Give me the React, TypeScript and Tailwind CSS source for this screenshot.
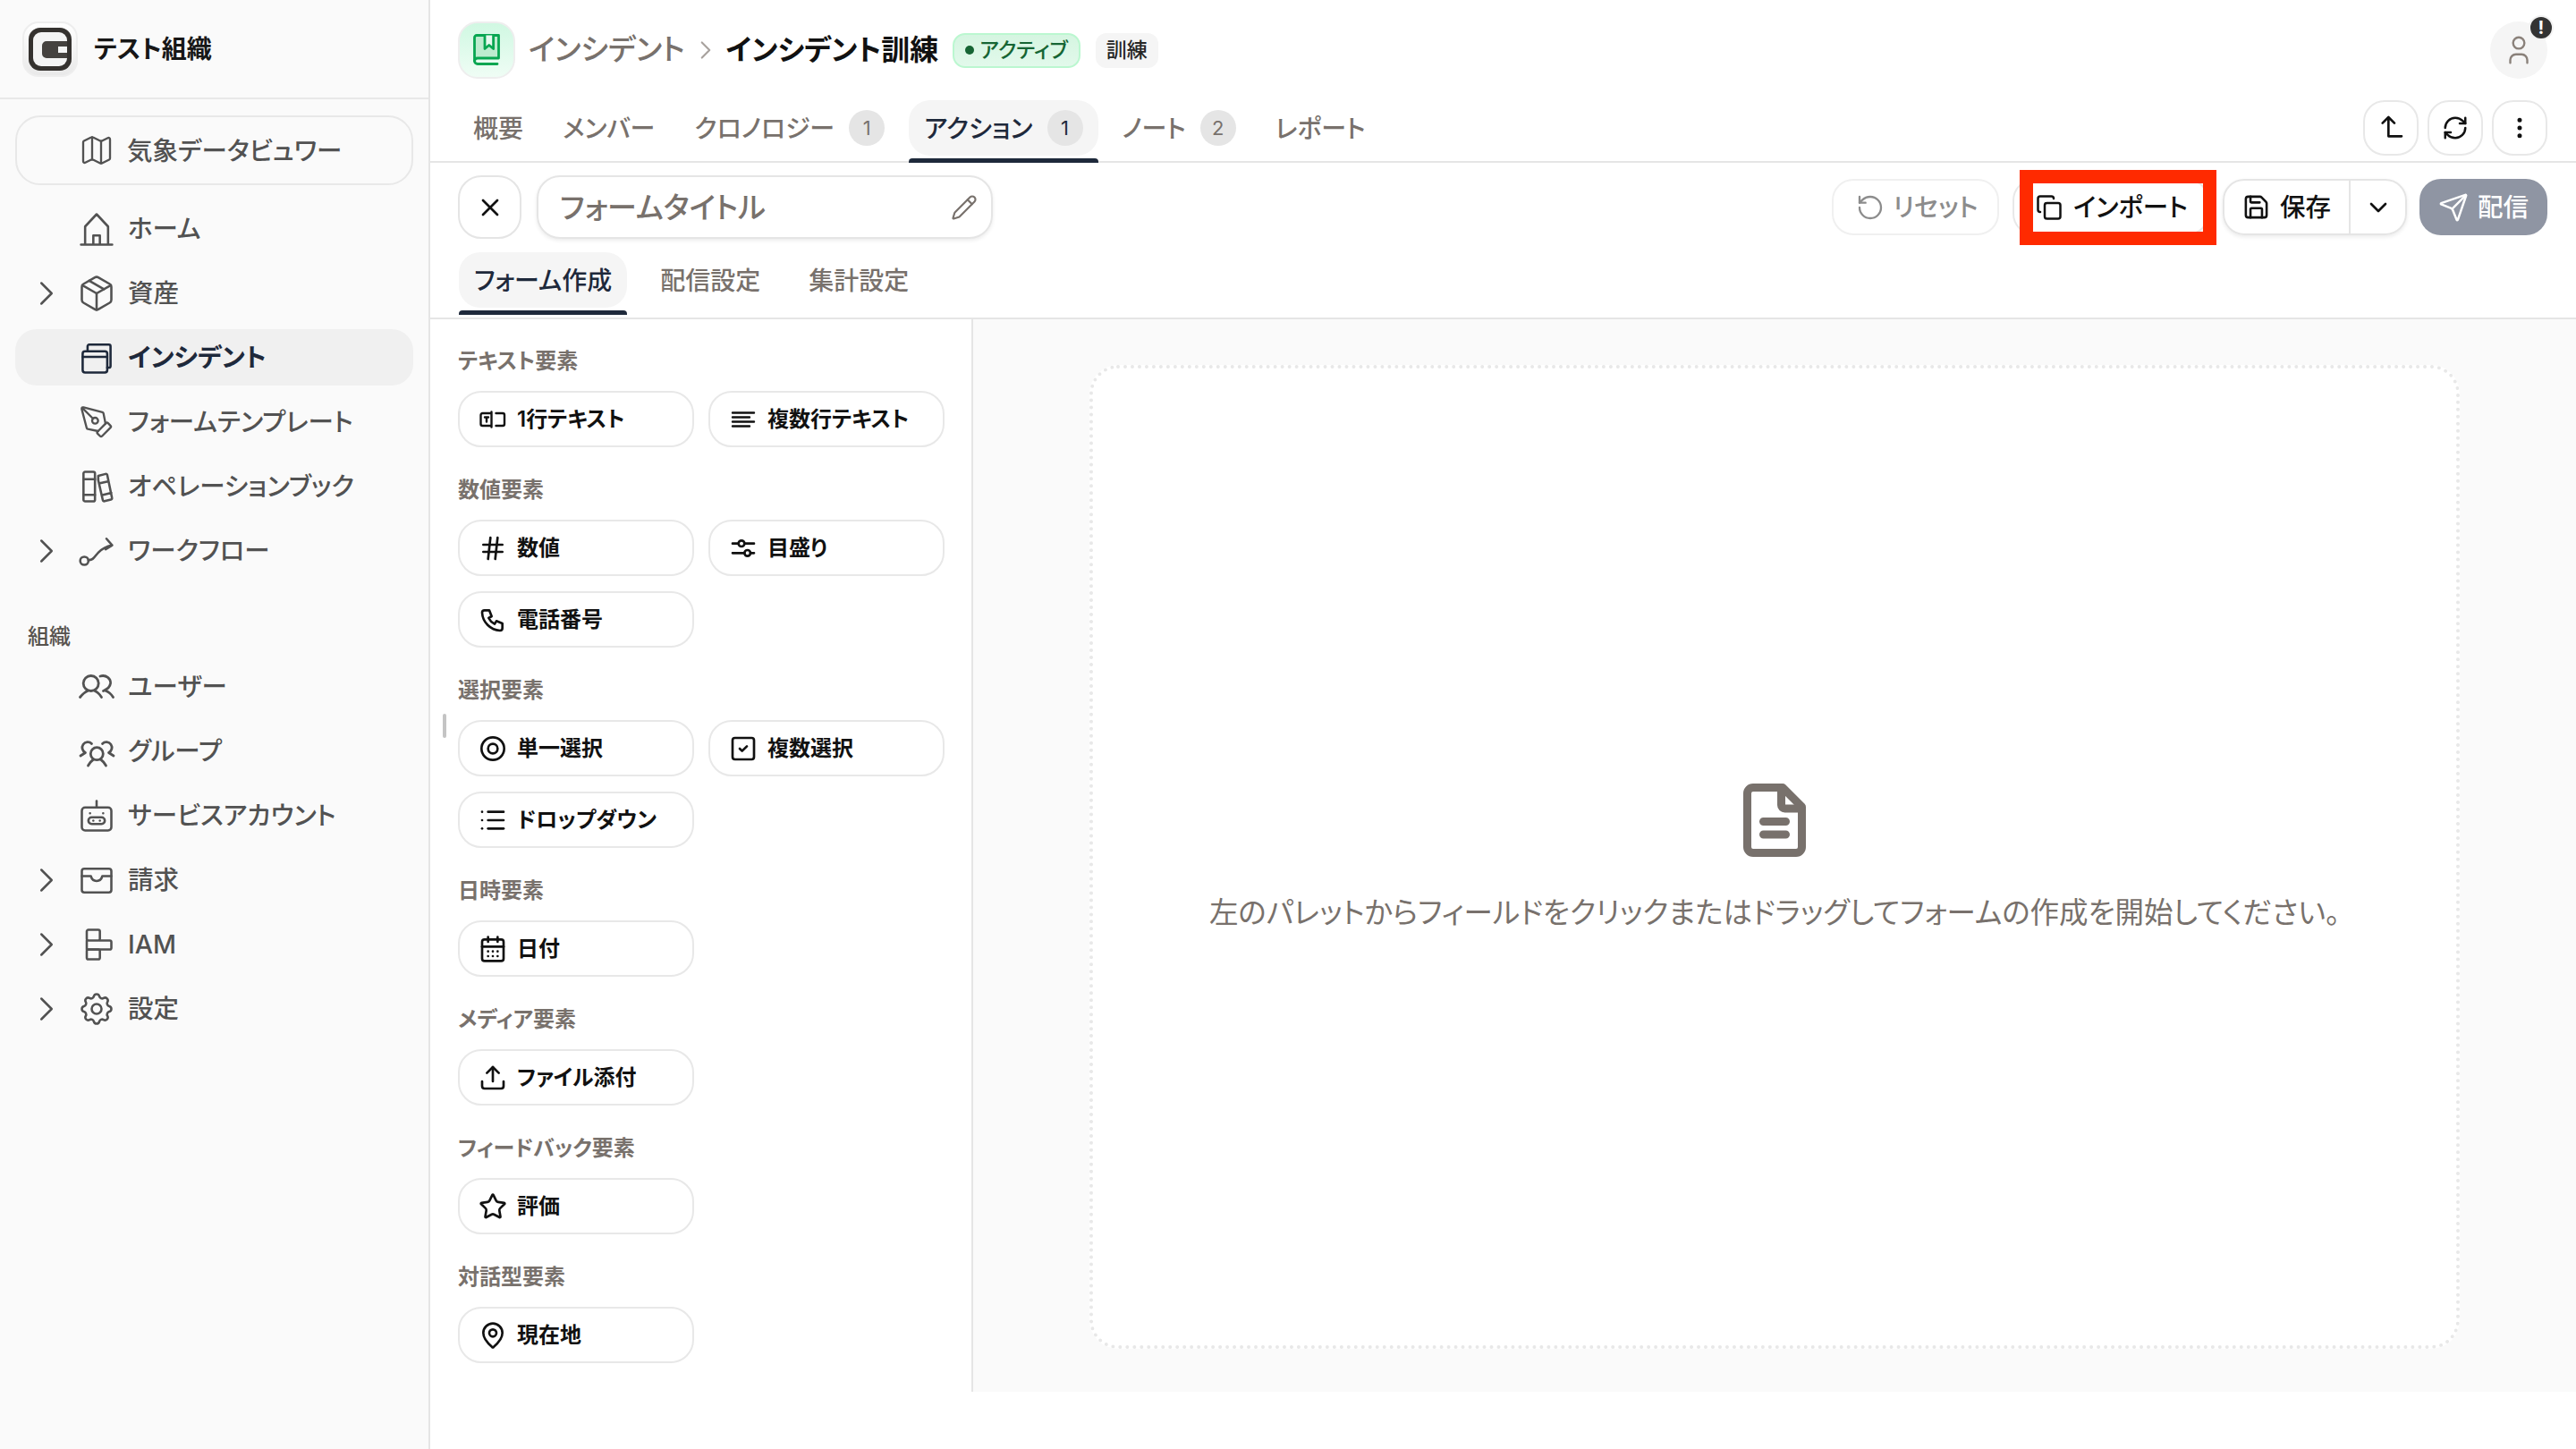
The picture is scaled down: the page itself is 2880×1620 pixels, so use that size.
import { ReactNode } from 'react'
import {
  CalendarDays, ChevronDown, ChevronRight, Copy, Hash, List, Map, MapPin, MoreVertical,
  Package, Pencil, PenTool, RefreshCw, RotateCcw, Save, Send, SquareCheck, Star, Upload, X,
} from 'lucide-react'
import { TbPhone, TbSettings, TbUser } from 'react-icons/tb'

function Ico({ children, size = 44, stroke = 1.4 }: { children: ReactNode; size?: number; stroke?: number }) {
  return (
    <svg width={size} height={size} viewBox="0 0 24 24" fill="none" stroke="currentColor" strokeWidth={stroke} strokeLinecap="round" strokeLinejoin="round">
      {children}
    </svg>
  )
}

// icons traced at pixel size
function PxIco({ w, h, stroke, children }: { w: number; h: number; stroke: number; children: ReactNode }) {
  return (
    <svg width={w} height={h} viewBox={`0 0 ${w} ${h}`} fill="none" stroke="currentColor" strokeWidth={stroke} strokeLinecap="round" strokeLinejoin="round">
      {children}
    </svg>
  )
}

const lucide = { size: 44, strokeWidth: 1.4 }
const pal = { size: 32, strokeWidth: 2 }

const HouseIcon = () => (
  <Ico><path d="M2.5 21.5h19M5 21.5V10.5L12 3l7 7.5v11M10 21.5V16h4v5.5" /></Ico>
)
const CardsIcon = () => (
  <Ico><rect x="3.5" y="8" width="15" height="13" rx="1.5" /><path d="M3.5 11.5h15M6.5 8V5a1 1 0 0 1 1-1h12a1 1 0 0 1 1 1v12a1 1 0 0 1-1 1h-1" /></Ico>
)
const BooksIcon = () => (
  <Ico><rect x="4" y="3" width="7" height="18" rx="1" /><path d="M4 7.5h7M4 17h7M13 5.5l4.5-1.2a.8.8 0 0 1 1 .6l2.9 14a.8.8 0 0 1-.6 1l-4 1a.8.8 0 0 1-1-.6L13 8zM14 10l5-1.2M16 17l5-1.2" /></Ico>
)
const RouteIcon = () => (
  <Ico><circle cx="4.5" cy="18" r="2.5" /><path d="M7 17.5c3 .5 4-2.5 6-4.5s4-3.5 8.5-4.5M18 4.5l3.5 4-4 2.5" /></Ico>
)
const UsersIcon = () => (
  <PxIco w={44} h={44} stroke={2.8}>
    <circle cx="15.7" cy="18" r="8.5" />
    <path d="M3.5 33.5Q8 28 12 26.5M20 26.5Q24 28 27.5 33.5" />
    <path d="M26 10C33 8 38 13 37.5 18C37 22 33 25 29.5 26.5M32.5 26.5Q37 28 40.5 33.5" />
  </PxIco>
)
const GroupIcon = () => (
  <PxIco w={44} h={44} stroke={2.8}>
    <circle cx="22.3" cy="24.7" r="7" />
    <path d="M12.5 38Q15 33.5 18 31.5M27 31.5Q30 33.5 32.5 38" />
    <path d="M16.5 13.5A6.2 6.2 0 1 0 9.5 23.5L4 27M28.5 13.5A6.2 6.2 0 1 1 35.5 23.5L41 27" />
  </PxIco>
)
const BotIcon = () => (
  <Ico><rect x="3" y="7" width="18" height="14" rx="2" /><path d="M12 3v4" /><rect x="7" y="13" width="10" height="4" rx="2" /><path d="M10 15h.01M14 15h.01M8 10.5h.01M16 10.5h.01" /></Ico>
)
const WalletIcon = () => (
  <Ico><rect x="3" y="5" width="18" height="14.5" rx="1.5" /><path d="M3 9.5h5.5c.5 2 1.8 3 3.5 3s3-1 3.5-3H21" /></Ico>
)
const IamIcon = () => (
  <Ico><rect x="6" y="3" width="8" height="6.5" rx="1" /><rect x="6" y="15" width="8" height="6" rx="1" /><path d="M6 9.5V15M14 9.5h6a1 1 0 0 1 1 1V14a1 1 0 0 1-1 1H6" /></Ico>
)
const TargetIcon = () => (
  <Ico size={32} stroke={2}><circle cx="12" cy="12" r="9.5" /><circle cx="12" cy="12" r="4" /></Ico>
)
const SlidersIcon = () => (
  <Ico size={32} stroke={2}><path d="M3 8h5M13 8h8M3 16h10M18 16h3" /><circle cx="10.5" cy="8" r="2.5" /><circle cx="15.5" cy="16" r="2.5" /></Ico>
)
const SingleLineIcon = () => (
  <PxIco w={32} h={20} stroke={2.4}>
    <path d="M14.5 1.5v17M14.5 3H4.5a2 2 0 0 0-2 2v10a2 2 0 0 0 2 2h10" />
    <path d="M19.5 3H27a2 2 0 0 1 2 2v10a2 2 0 0 1-2 2h-7.5" />
    <path d="M7 7.5h4M9 7.5v5" />
  </PxIco>
)
const MultiLineIcon = () => (
  <PxIco w={28} h={20} stroke={2.4}>
    <path d="M2 2.5h24M2 7.5h19M2 12.5h24M2 17.5h19" />
  </PxIco>
)
const BookIcon = () => (
  <svg width="32" height="38" viewBox="0 0 32 38" fill="none" stroke="#08a651" strokeWidth="2.8" strokeLinecap="round" strokeLinejoin="round">
    <path d="M2.5 31V5a2.5 2.5 0 0 1 2.5-2.5h24.5V28H6a3.5 3.5 0 0 0-3.5 3z" fill="#bdeccf" />
    <path d="M14 2.5v15l4.8-4 4.8 4v-15" fill="#e6f9ee" />
    <path d="M2.5 31a3.5 3.5 0 0 0 3.5 3.5h22" />
  </svg>
)

function Logo() {
  return (
    <div className="flex h-[62px] w-[62px] items-center justify-center rounded-[18px] border-2 border-[#eeeeee] bg-gradient-to-b from-white to-[#e9e9e9]">
      <svg width="48" height="48" viewBox="0 0 48 48">
        <rect x="0" y="0" width="48" height="48" rx="13" fill="#35322f" />
        <rect x="5" y="5" width="38" height="38" rx="9" fill="#f4f4f4" />
        <path d="M20 15h23v6H33v7h10v6H20a5 5 0 0 1-5-5v-9a5 5 0 0 1 5-5z" fill="#45423f" />
      </svg>
    </div>
  )
}

function NavRow({ icon, label, chevron, active }: { icon: ReactNode; label: string; chevron?: boolean; active?: boolean }) {
  return (
    <div className={`flex h-[63px] items-center rounded-[24px] pl-[23px] ${active ? 'bg-[#f0f0f0] font-semibold text-[#1e293b]' : 'font-medium text-[#525252]'}`}>
      <span className="flex w-[24px] justify-center">
        {chevron && <ChevronRight size={46} strokeWidth={1.3} className="shrink-0" />}
      </span>
      <span className="ml-[22px] flex w-[44px] justify-center">{icon}</span>
      <span className="ml-[13px] pt-[2px]">{label}</span>
    </div>
  )
}

function Sidebar() {
  return (
    <aside className="flex h-[1620px] w-[481px] shrink-0 flex-col border-r-2 border-[#e5e5e5] bg-[#fafafa] text-[28.5px]">
      <div className="flex h-[111px] shrink-0 items-center gap-[18px] border-b-2 border-[#e8e8e8] pl-[25px]">
        <Logo />
        <span className="text-[28px] font-semibold text-[#171717]">テスト組織</span>
      </div>
      <div className="flex flex-col px-[17px] pt-[18px]">
        <div className="mb-[17px] flex h-[78px] items-center rounded-[28px] border-2 border-[#e8e8e8] pl-[69px] font-medium text-[#525252]">
          <Map size={40} strokeWidth={1.4} />
          <span className="ml-[14px] pt-[2px]">気象データビュワー</span>
        </div>
        <div className="flex flex-col gap-[9px]">
          <NavRow icon={<HouseIcon />} label="ホーム" />
          <NavRow icon={<Package {...lucide} />} label="資産" chevron />
          <NavRow icon={<CardsIcon />} label="インシデント" active />
          <NavRow icon={<PenTool size={40} strokeWidth={1.4} />} label="フォームテンプレート" />
          <NavRow icon={<BooksIcon />} label="オペレーションブック" />
          <NavRow icon={<RouteIcon />} label="ワークフロー" chevron />
        </div>
        <div className="mt-[50px] mb-[9px] h-[30px] pl-[14px] text-[24px] leading-[30px] font-medium text-[#57534e]">組織</div>
        <div className="flex flex-col gap-[9px]">
          <NavRow icon={<UsersIcon />} label="ユーザー" />
          <NavRow icon={<GroupIcon />} label="グループ" />
          <NavRow icon={<BotIcon />} label="サービスアカウント" />
          <NavRow icon={<WalletIcon />} label="請求" chevron />
          <NavRow icon={<IamIcon />} label="IAM" chevron />
          <NavRow icon={<TbSettings size={46} strokeWidth={1.4} />} label="設定" chevron />
        </div>
      </div>
    </aside>
  )
}

function Tab({ label, count, active }: { label: string; count?: number; active?: boolean }) {
  return (
    <div className="flex flex-col">
      <div className={`flex h-[62px] items-center gap-[16px] rounded-[24px] px-[17px] text-[28px] font-medium ${active ? 'bg-[#f5f5f5] text-[#1e293b]' : 'text-[#78716c]'}`}>
        <span className="pt-[1px]">{label}</span>
        {count !== undefined && (
          <span className={`flex h-[40px] w-[40px] items-center justify-center rounded-full bg-[#e5e5e5] text-[22px] font-normal ${active ? 'text-[#1e293b]' : 'text-[#78716c]'}`}>{count}</span>
        )}
      </div>
      <div className={`mt-[3px] h-[5px] rounded-t-[4px] ${active ? 'bg-[#1e293b]' : ''}`} />
    </div>
  )
}

function IconButton({ children }: { children: ReactNode }) {
  return (
    <div className="flex h-[62px] w-[62px] items-center justify-center rounded-[24px] border-2 border-[#e8e8e8] bg-white text-[#111111]">{children}</div>
  )
}

function TopBar() {
  return (
    <div className="flex flex-col pt-[24px]">
      <div className="flex h-[64px] items-center pr-[32px] pl-[31px]">
        <div className="flex h-[64px] w-[64px] items-center justify-center rounded-[22px] border-2 border-[#eeeeee] bg-gradient-to-b from-[#d0f8e2] to-[#effdf5]">
          <BookIcon />
        </div>
        <span className="ml-[15px] text-[33px] font-medium text-[#78716c]">インシデント</span>
        <ChevronRight className="mx-[6px] text-[#a8a29e]" size={34} strokeWidth={1.5} />
        <span className="text-[32px] font-semibold text-[#111111]">インシデント訓練</span>
        <span className="ml-[16px] flex h-[39px] items-center gap-[6px] rounded-[14px] border-2 border-[#bbf7d0] bg-gradient-to-b from-[#d5f5e1] to-[#e2f9eb] px-[12px] text-[23px] font-medium text-[#166534]">
          <span className="h-[10px] w-[10px] rounded-full bg-[#166534]" />
          アクティブ
        </span>
        <span className="ml-[17px] flex h-[39px] items-center rounded-[12px] bg-[#f5f5f5] px-[12px] text-[23px] font-medium text-[#262626]">訓練</span>
        <div className="relative ml-auto flex h-[64px] w-[64px] items-center justify-center rounded-full bg-[#f5f5f5] text-[#8a817a]">
          <TbUser size={38} strokeWidth={1.5} />
          <span className="absolute -top-[7px] -right-[7px] flex h-[28px] w-[28px] items-center justify-center rounded-full border-2 border-[#f2f2f2] bg-[#333333] text-[20px] leading-none font-bold text-white">!</span>
        </div>
      </div>
      <div className="mt-[24px] flex h-[70px] items-start justify-between border-b-2 border-[#e5e5e5] pr-[32px] pl-[31px]">
        <div className="flex items-start gap-[10px]">
          <Tab label="概要" />
          <Tab label="メンバー" />
          <Tab label="クロノロジー" count={1} />
          <Tab label="アクション" count={1} active />
          <Tab label="ノート" count={2} />
          <Tab label="レポート" />
        </div>
        <div className="flex gap-[10px]">
          <IconButton>
            <Ico size={32} stroke={2}><path d="M5 8l5-5 5 5M10 3v16h11" /></Ico>
          </IconButton>
          <IconButton><RefreshCw size={30} strokeWidth={2} /></IconButton>
          <IconButton><MoreVertical size={30} strokeWidth={2} /></IconButton>
        </div>
      </div>
    </div>
  )
}

function Toolbar() {
  return (
    <div className="flex h-[100px] items-start justify-between pt-[14px] pr-[32px] pl-[31px]">
      <div className="flex gap-[17px]">
        <div className="flex h-[71px] w-[71px] items-center justify-center rounded-[26px] border-2 border-[#e5e5e5] text-[#111111]">
          <X size={32} strokeWidth={2} />
        </div>
        <div className="flex h-[71px] w-[510px] items-center justify-between rounded-[26px] border-2 border-[#e5e5e5] pr-[15px] pl-[24px] shadow-[0_2px_4px_rgba(0,0,0,0.08)]">
          <span className="pt-[2px] text-[33px] font-medium text-[#78716c]">フォームタイトル</span>
          <Pencil className="text-[#78716c]" size={30} strokeWidth={1.75} />
        </div>
      </div>
      <div className="mt-[4px] flex h-[63px] items-center text-[28.5px] font-medium">
        <div className="flex h-[63px] w-[187px] items-center justify-center gap-[10px] rounded-[24px] border-2 border-[#f0f0f0] pl-[3px] text-[#8c8c8c]">
          <RotateCcw size={32} strokeWidth={1.75} />
          <span className="pt-[2px]">リセット</span>
        </div>
        <div className="relative ml-[15px] flex h-[63px] w-[220px] items-center rounded-[24px] border-2 border-[#e8e8e8] pl-[24px] text-[#111111]">
          <Copy size={30} strokeWidth={2} />
          <span className="ml-[12px] pt-[2px]">インポート</span>
          <span className="absolute -top-[12px] right-[-10px] -bottom-[13px] left-[6px] border-[15px] border-[#ff2a00]" />
        </div>
        <div className="ml-[15px] flex h-[63px] w-[206px] items-center rounded-[24px] border-2 border-[#e5e5e5] text-[#111111] shadow-[0_2px_4px_rgba(0,0,0,0.08)]">
          <div className="flex h-full w-[141px] items-center justify-center gap-[11px] border-r-2 border-[#e5e5e5]">
            <Save size={31} strokeWidth={2} />
            <span className="pt-[2px]">保存</span>
          </div>
          <div className="flex flex-1 justify-center">
            <ChevronDown size={32} strokeWidth={2} />
          </div>
        </div>
        <div className="ml-[14px] flex h-[63px] w-[143px] items-center justify-center gap-[10px] rounded-[24px] bg-[#8f95a3] text-white">
          <Send size={34} strokeWidth={1.75} />
          <span className="pt-[2px]">配信</span>
        </div>
      </div>
    </div>
  )
}

function FieldButton({ icon, label }: { icon: ReactNode; label: string }) {
  return (
    <div className="flex h-[63px] w-[264px] items-center gap-[11px] rounded-[26px] border-2 border-[#e8e8e8] pl-[21px] text-[24px] font-semibold text-[#111111]">
      <span className="flex w-[32px] justify-center">{icon}</span>
      <span>{label}</span>
    </div>
  )
}

function Section({ title, children }: { title: string; children: ReactNode }) {
  return (
    <div>
      <div className="mb-[18px] h-[30px] text-[24px] leading-[30px] font-semibold text-[#78716c]">{title}</div>
      <div className="grid w-[544px] grid-cols-2 gap-x-[16px] gap-y-[17px]">{children}</div>
    </div>
  )
}

function Palette() {
  return (
    <div className="relative flex w-[607px] shrink-0 flex-col gap-[33px] border-r-2 border-[#e5e5e5] pt-[32px] pl-[31px]">
      <span className="absolute top-[441px] left-[14px] h-[27px] w-[4px] rounded-full bg-[#c4c4c4]" />
      <Section title="テキスト要素">
        <FieldButton icon={<SingleLineIcon />} label="1行テキスト" />
        <FieldButton icon={<MultiLineIcon />} label="複数行テキスト" />
      </Section>
      <Section title="数値要素">
        <FieldButton icon={<Hash {...pal} />} label="数値" />
        <FieldButton icon={<SlidersIcon />} label="目盛り" />
        <FieldButton icon={<TbPhone size={32} strokeWidth={2} />} label="電話番号" />
      </Section>
      <Section title="選択要素">
        <FieldButton icon={<TargetIcon />} label="単一選択" />
        <FieldButton icon={<SquareCheck {...pal} />} label="複数選択" />
        <FieldButton icon={<List {...pal} />} label="ドロップダウン" />
      </Section>
      <Section title="日時要素">
        <FieldButton icon={<CalendarDays {...pal} />} label="日付" />
      </Section>
      <Section title="メディア要素">
        <FieldButton icon={<Upload {...pal} />} label="ファイル添付" />
      </Section>
      <Section title="フィードバック要素">
        <FieldButton icon={<Star {...pal} />} label="評価" />
      </Section>
      <Section title="対話型要素">
        <FieldButton icon={<MapPin {...pal} />} label="現在地" />
      </Section>
    </div>
  )
}

function Canvas() {
  return (
    <div className="flex flex-1 bg-[#fafafa] px-[130px] pt-[51px] pb-[48px]">
      <div className="flex flex-1 flex-col items-center justify-center rounded-[32px] border-4 border-dotted border-[#e8e8e8] bg-white pt-[6px] text-[#78716c]">
        <PxIco w={70} h={82} stroke={9}>
          <path d="M11 4.5h33L65.5 26v45a6.5 6.5 0 0 1-6.5 6.5H11A6.5 6.5 0 0 1 4.5 71V11A6.5 6.5 0 0 1 11 4.5z" />
          <path d="M42.5 6v18a4 4 0 0 0 4 4H64" />
          <path d="M22.5 42.5h25M22.5 57h25" />
        </PxIco>
        <p className="mt-[39px] text-[32.5px]">左のパレットからフィールドをクリックまたはドラッグしてフォームの作成を開始してください。</p>
      </div>
    </div>
  )
}

export default function App() {
  return (
    <div className="flex h-[1620px] w-[2880px] overflow-hidden bg-white font-['Inter','Noto_Sans_CJK_JP',sans-serif] [font-feature-settings:'palt']">
      <Sidebar />
      <main className="flex min-w-0 flex-1 flex-col">
        <TopBar />
        <Toolbar />
        <div className="flex h-[75px] items-start border-b-2 border-[#e5e5e5] pl-[32px]">
          <div className="flex items-start gap-[20px]">
            <Tab label="フォーム作成" active />
            <Tab label="配信設定" />
            <Tab label="集計設定" />
          </div>
        </div>
        <div className="flex h-[1199px]">
          <Palette />
          <Canvas />
        </div>
      </main>
    </div>
  )
}
